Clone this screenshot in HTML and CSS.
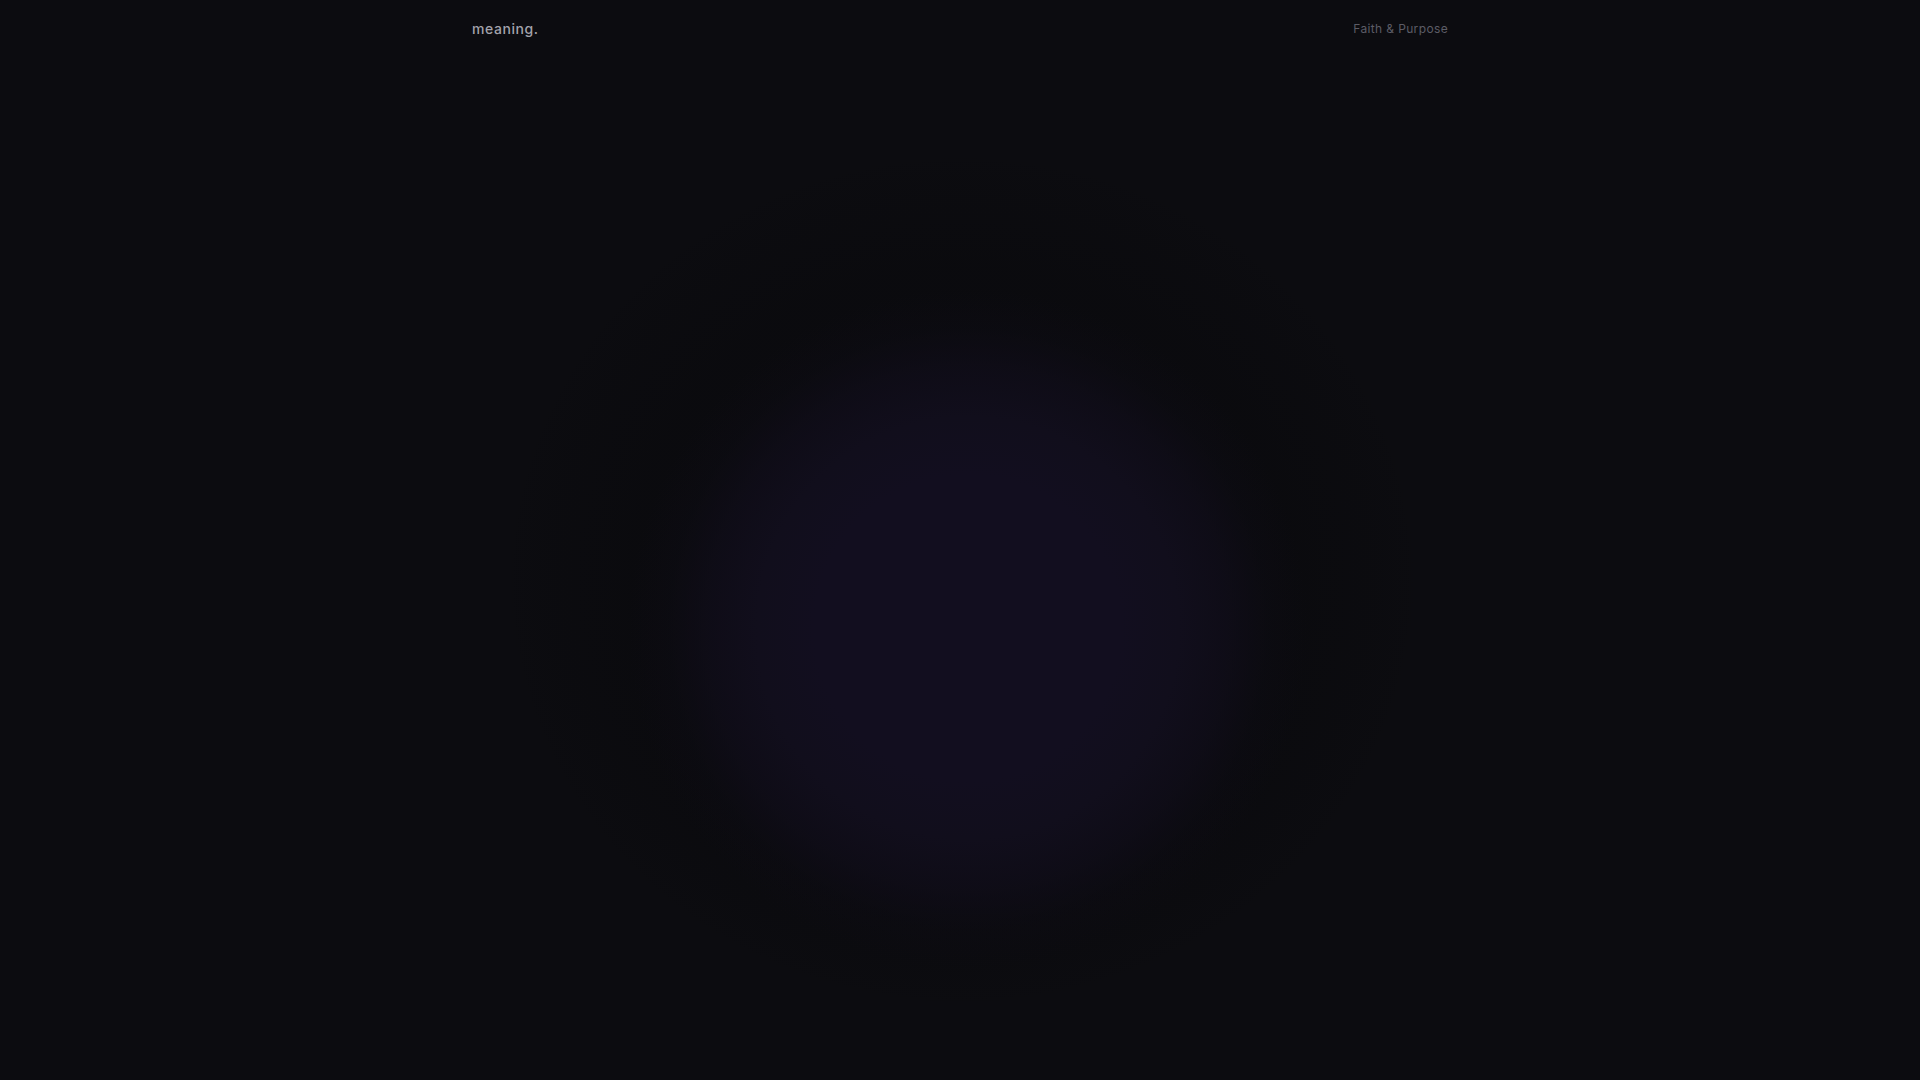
FILE: index.html
```html
<!DOCTYPE html>
<html lang="en">
<head>
<meta charset="utf-8">
<title>meaning.</title>
<link rel="stylesheet" href="styles.css">
</head>
<body>
<div class="page">
  <div class="halo"></div>
  <div class="glow"></div>
  <header class="header">
    <div class="brand">meaning.</div>
    <div class="tag">Faith &amp; Purpose</div>
  </header>
  <main class="hero"></main>
</div>
</body>
</html>
```

FILE: styles.css
```css
* { box-sizing: border-box; }
html, body {
  margin: 0;
  padding: 0;
  background: #0c0c10;
  font-family: Inter, "Noto Sans", sans-serif;
}
.page {
  position: relative;
  min-height: 100vh;
  overflow: hidden;
}
.halo {
  position: absolute;
  left: 962px;
  top: 580px;
  width: 920px;
  height: 860px;
  margin-left: -460px;
  margin-top: -430px;
  border-radius: 50%;
  background: radial-gradient(closest-side, rgba(8, 8, 11, 0.4) 0%, rgba(8, 8, 11, 0.4) 72%, rgba(8, 8, 11, 0.2) 88%, rgba(8, 8, 11, 0) 100%);
  pointer-events: none;
}
.glow {
  position: absolute;
  left: 968px;
  top: 628px;
  width: 680px;
  height: 680px;
  margin-left: -340px;
  margin-top: -340px;
  border-radius: 50%;
  background: radial-gradient(closest-side, #120e1f 0%, #120e1f 45%, #110e1c 62%, rgba(16, 13, 26, 0.75) 76%, rgba(14, 12, 22, 0.35) 88%, rgba(14, 12, 22, 0) 100%);
  pointer-events: none;
}
.header {
  position: relative;
  max-width: 1024px;
  margin: 0 auto;
  padding: 0 24px;
  height: 56px;
  display: flex;
  align-items: center;
  justify-content: space-between;
}
.brand {
  font-size: 14px;
  font-weight: 500;
  color: #a3a3ab;
  letter-spacing: 0.04em;
}
.tag {
  font-size: 12px;
  font-weight: 400;
  color: #5c5c66;
  letter-spacing: 0.03em;
}
.hero {
  min-height: calc(100vh - 56px);
}
```
